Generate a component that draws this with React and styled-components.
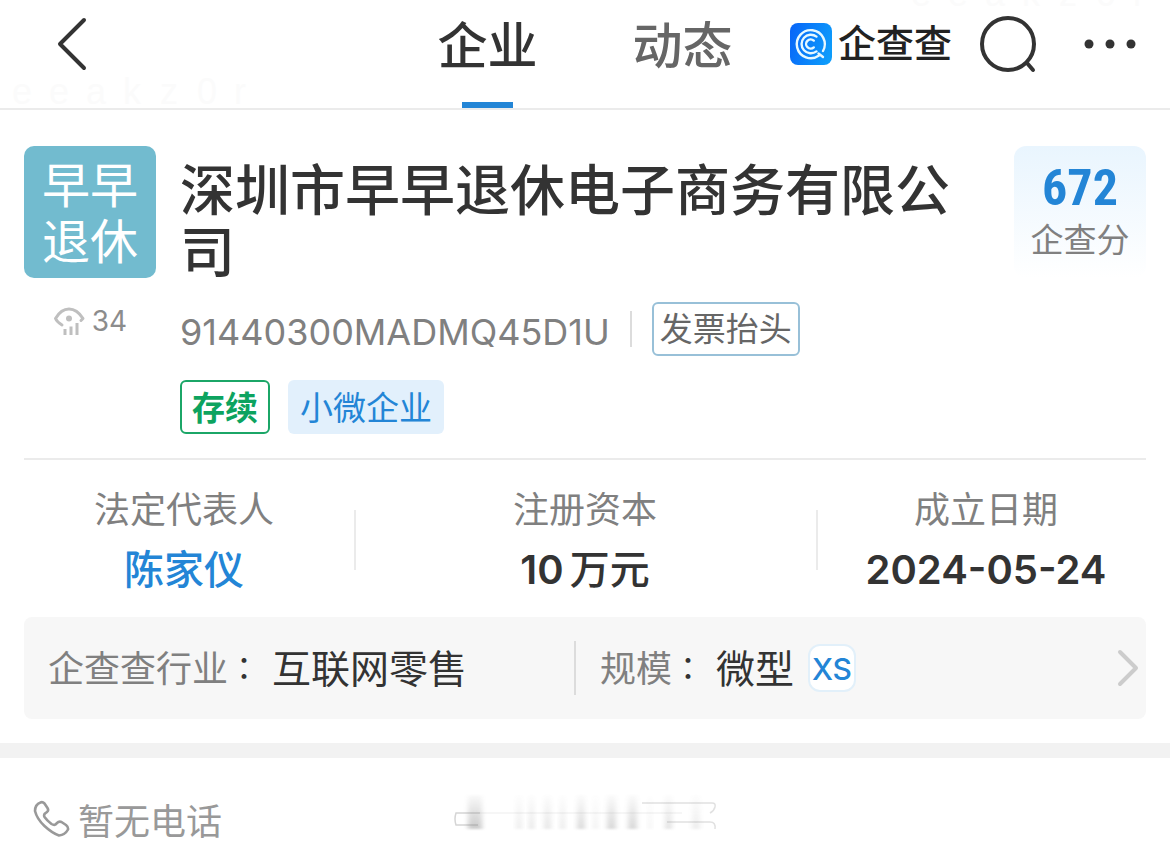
import React from "react";
import styled, { createGlobalStyle } from "styled-components";

const ink = "#333333";
const muted = "#808080";
const blue = "#2385d6";
const cjk = `"Noto Sans CJK SC", sans-serif`;
const latin = `Inter, "Noto Sans CJK SC", sans-serif`;

const GlobalStyle = createGlobalStyle`
  *, *::before, *::after { box-sizing: border-box; }
  body { margin: 0; background: #ffffff; color: ${ink}; font-family: ${cjk}; }
  button { font: inherit; color: inherit; background: none; border: 0; padding: 0; cursor: pointer; }
  a { text-decoration: none; color: inherit; }
  h1, p, dl, dt, dd { margin: 0; font-weight: 400; }
  svg { display: block; flex: none; }
`;

const Header = styled.header`
  position: relative;
  display: grid;
  grid-template-columns: 1fr auto 1fr;
  height: 110px;
  padding: 0 34px;
  border-bottom: 2px solid #ebebeb;
`;

const BackButton = styled.button`
  justify-self: start;
  align-self: start;
  margin: 16px 0 0 20px;
`;

const Tabs = styled.nav`
  display: flex;
  gap: 95px;
`;

const Tab = styled.a`
  display: flex;
  flex-direction: column;
  align-items: center;
  justify-content: space-between;
  font-size: 50px;
  line-height: 84px;
  font-weight: 500;
  color: ${(p) => (p.$active ? ink : "#666666")};
  &::after {
    content: "";
    width: 51px;
    height: 6px;
    background: ${(p) => (p.$active ? blue : "transparent")};
  }
`;

const Actions = styled.div`
  display: flex;
  justify-content: flex-end;
  height: 88px;
  align-items: center;
`;

const Brand = styled.a`
  display: flex;
  align-items: center;
  gap: 6px;
  margin-right: 26px;
`;

const BrandName = styled.span`
  padding-bottom: 6px;
  font-size: 38px;
  font-weight: 500;
  line-height: 48px;
  color: #222222;
`;

const SearchButton = styled.button`
  margin-right: 46px;
`;

const Watermark = styled.span`
  position: absolute;
  z-index: -1;
  display: grid;
  grid-template-columns: repeat(7, 37px);
  font: 36px/40px "Liberation Sans", sans-serif;
  color: #fbfbfb;
  ${(p) => (p.$corner === "top" ? "right: 0; top: -26px;" : "left: 12px; bottom: -4px;")}
`;

const Company = styled.section`
  display: flex;
  gap: 24px;
  align-items: flex-start;
  margin: 0 24px;
  padding: 36px 0 24px;
  border-bottom: 2px solid #ebebeb;
`;

const AvatarColumn = styled.div`
  flex: none;
  width: 132px;
`;

const Avatar = styled.div`
  height: 132px;
  padding: 8px 18px;
  border-radius: 10px;
  background: #72bbcf;
  color: #ffffff;
  font-size: 48px;
  line-height: 56px;
  text-align: center;
`;

const Views = styled.p`
  display: flex;
  align-items: center;
  justify-content: center;
  gap: 7px;
  margin-top: 26px;
  font: 28px/34px ${latin};
  color: #8c8c8c;
`;

const Details = styled.div`
  flex: 1;
  padding-top: 9px;
`;

const CompanyName = styled.h1`
  font-size: 55px;
  line-height: 62px;
  font-weight: 500;
`;

const CodeRow = styled.div`
  display: flex;
  align-items: center;
  gap: 20px;
  margin-top: 23px;
`;

const CreditCode = styled.span`
  padding-top: 6px;
  font: 36px/48px ${latin};
  color: ${muted};
`;

const Rule = styled.span`
  width: 2px;
  height: 36px;
  background: #dcdcdc;
`;

const InvoiceButton = styled.button`
  height: 54px;
  padding: 0 6px 4px;
  border: 2px solid #98c0d8;
  border-radius: 6px;
  font-size: 33px;
  line-height: 46px;
  color: #666666;
`;

const Tags = styled.div`
  display: flex;
  gap: 18px;
  margin-top: 24px;
`;

const Tag = styled.span`
  height: 54px;
  padding: 0 ${(p) => (p.$status ? 10 : 12)}px;
  border: ${(p) => (p.$status ? "2px solid #1ba667" : "0")};
  border-radius: 6px;
  background: ${(p) => (p.$status ? "#ffffff" : "#e2f0fc")};
  color: ${(p) => (p.$status ? "#0da35f" : blue)};
  font-size: 33px;
  font-weight: ${(p) => (p.$status ? 700 : 400)};
  line-height: ${(p) => (p.$status ? 48 : 52)}px;
`;

const Score = styled.a`
  flex: none;
  width: 132px;
  height: 132px;
  padding-top: 16px;
  border-radius: 12px;
  background: linear-gradient(#e9f5fe, #ffffff);
  text-align: center;
`;

const ScoreValue = styled.strong`
  display: block;
  font: 700 50px/52px "Roboto Condensed", Roboto, sans-serif;
  color: ${blue};
`;

const ScoreLabel = styled.span`
  display: block;
  font-size: 33px;
  line-height: 48px;
  color: ${muted};
`;

const Stats = styled.dl`
  display: grid;
  grid-template-columns: 5fr 7fr 5fr;
  margin: 0 24px;
  padding: 22px 0 18px;
`;

const Stat = styled.div`
  position: relative;
  text-align: center;
  &:first-child { padding-right: 10px; }
  &:last-child { padding-left: 10px; }
  & + &::before {
    content: "";
    position: absolute;
    left: 0;
    top: 28px;
    width: 2px;
    height: 60px;
    background: #ebebeb;
  }
`;

const StatLabel = styled.dt`
  font-size: 36px;
  line-height: 50px;
  color: ${muted};
`;

const StatValue = styled.dd`
  height: 67px;
  padding-top: 9px;
  font: 600 40px/57px ${latin};
  color: ${(p) => (p.$link ? blue : ink)};
`;

const Hanzi = styled.span`
  margin-left: ${(p) => (p.$spaced ? 6 : 0)}px;
  font-family: ${cjk};
  font-weight: 500;
  line-height: 40px;
`;

const Industry = styled.a`
  display: flex;
  align-items: center;
  height: 102px;
  margin: 0 24px 24px;
  padding-right: 7px;
  border-radius: 8px;
  background: #f7f7f7;
`;

const Fact = styled.span`
  display: flex;
  align-items: center;
  flex: ${(p) => (p.$grow ? "1" : "0 0 49.5%")};
  height: 54px;
  padding: 0 0 4px 24px;
  border-right: ${(p) => (p.$grow ? "0" : "2px solid #dcdcdc")};
  font-size: 39px;
  line-height: 50px;
`;

const FactLabel = styled.span`
  font-size: 36px;
  color: ${muted};
`;

const Colon = styled.span`
  margin-right: 12px;
  font-family: "Noto Sans CJK JP", sans-serif;
  font-size: 32px;
`;

const SizeBadge = styled.span`
  width: 48px;
  height: 48px;
  margin: 4px 0 0 14px;
  border: 2px solid #e2f0fa;
  border-radius: 12px;
  background: #ffffff;
  font: 500 30px/46px ${latin};
  text-align: center;
  color: ${blue};
`;

const Band = styled.div`
  height: 15px;
  background: #f2f2f2;
`;

const Contact = styled.footer`
  display: grid;
  grid-template-columns: 1fr auto 1fr;
  align-items: start;
  padding: 34px 32px 0;
`;

const Phone = styled.p`
  display: flex;
  align-items: center;
  gap: 8px;
  padding-top: 8px;
  font-size: 36px;
  line-height: 38px;
  color: #999999;
`;

const smudges = [
  [16, 14, 0.3], [64, 6, 0.1], [77, 5, 0.14], [92, 7, 0.14], [108, 5, 0.12],
  [125, 8, 0.2], [141, 5, 0.08], [155, 9, 0.22], [176, 9, 0.22], [196, 4, 0.06],
  [213, 7, 0.16], [240, 8, 0.1],
];

const Redacted = () => (
  <svg width="266" height="40" viewBox="0 0 266 40" aria-hidden="true">
    <defs>
      <filter id="soft" x="-50%" y="-20%" width="200%" height="140%">
        <feGaussianBlur stdDeviation="2.500 1" />
      </filter>
      <linearGradient id="fade" x1="0" y1="0" x2="0" y2="1">
        <stop offset="0" stopColor="#666" stopOpacity="0.1" />
        <stop offset="1" stopColor="#666" />
      </linearGradient>
    </defs>
    {smudges.map(([x, w, o]) => (
      <rect key={x} x={x} y="3" width={w} height="34" fill="url(#fade)" opacity={o * 1.15} filter="url(#soft)" />
    ))}
    <path d="M28 21H4q-2 6 0 12h22" fill="none" stroke="#888" strokeOpacity=".35" strokeWidth="1.5" />
    <path d="M28 21H230" fill="none" stroke="#888" strokeOpacity=".1" strokeWidth="1.5" />
    <path d="M190 11h70q4 0 3 4t-5 6M215 30h43q6 0 5 7" fill="none" stroke="#888" strokeOpacity=".25" strokeWidth="1.5" />
  </svg>
);

const BrandMark = () => (
  <svg width="42" height="42" viewBox="0 0 42 42" aria-hidden="true">
    <defs>
      <linearGradient id="brand" x1="0" y1="0.3" x2="1" y2="0.6">
        <stop offset="0" stopColor="#0868f8" />
        <stop offset="1" stopColor="#0d9cfb" />
      </linearGradient>
    </defs>
    <rect width="42" height="42" rx="8" fill="url(#brand)" />
    <g fill="none" stroke="#e6f8ff" strokeWidth="2.4" strokeLinecap="round">
      <path d="M29 32.500A14 14 0 1 1 33 28" />
      <path d="M28.500 30.500l4.500 3.500" />
      <path d="M26.500 13.600A9.300 9.300 0 1 0 26.500 28.400" />
      <path d="M23.800 17.600A4.600 4.600 0 1 0 23.800 24.400" />
    </g>
  </svg>
);

export default function App() {
  return (
    <>
      <GlobalStyle />
      <Header>
        <Watermark aria-hidden="true">{[..."eeakz0r"].map((c, i) => <span key={i}>{c}</span>)}</Watermark>
        <Watermark $corner="top" aria-hidden="true">{[..."eeakz0r"].map((c, i) => <span key={i}>{c}</span>)}</Watermark>
        <BackButton aria-label="返回">
          <svg width="34" height="56" viewBox="0 0 34 56" fill="none" stroke={ink} strokeWidth="4" strokeLinecap="round" strokeLinejoin="round">
            <path d="M30 4L6 28l24 24" />
          </svg>
        </BackButton>
        <Tabs>
          <Tab href="#company" $active aria-current="page">企业</Tab>
          <Tab href="#news">动态</Tab>
        </Tabs>
        <Actions>
          <Brand href="#home">
            <BrandMark />
            <BrandName>企查查</BrandName>
          </Brand>
          <SearchButton aria-label="搜索">
            <svg width="60" height="60" viewBox="0 0 60 60" fill="none" stroke={ink} strokeWidth="4" strokeLinecap="round">
              <circle cx="30" cy="30" r="26" />
              <path d="M49 49l6 7" />
            </svg>
          </SearchButton>
          <button aria-label="更多">
            <svg width="52" height="10" viewBox="0 0 52 10" fill={ink}>
              <circle cx="5" cy="5" r="4.5" />
              <circle cx="26" cy="5" r="4.5" />
              <circle cx="47" cy="5" r="4.5" />
            </svg>
          </button>
        </Actions>
      </Header>

      <main>
        <Company>
          <AvatarColumn>
            <Avatar>早早退休</Avatar>
            <Views>
              <svg width="32" height="28" viewBox="0 0 32 28" fill="none" stroke="#bfbfbf" strokeWidth="3" strokeLinecap="round" strokeLinejoin="round" aria-hidden="true">
                <path d="M9 18Q4 15 2.500 11.500Q8 2 16 2T30 11.500L28 13.500" />
                <circle cx="16" cy="11.500" r="3" fill="#bfbfbf" stroke="none" />
                <path d="M12 22v6M18 19.500v8.500M24 16v12" strokeLinecap="butt" />
              </svg>
              34
            </Views>
          </AvatarColumn>
          <Details>
            <CompanyName>深圳市早早退休电子商务有限公司</CompanyName>
            <CodeRow>
              <CreditCode>91440300MADMQ45D1U</CreditCode>
              <Rule />
              <InvoiceButton>发票抬头</InvoiceButton>
            </CodeRow>
            <Tags>
              <Tag $status>存续</Tag>
              <Tag>小微企业</Tag>
            </Tags>
          </Details>
          <Score href="#score">
            <ScoreValue>672</ScoreValue>
            <ScoreLabel>企查分</ScoreLabel>
          </Score>
        </Company>

        <Stats>
          <Stat>
            <StatLabel>法定代表人</StatLabel>
            <StatValue $link><Hanzi as="a" href="#person">陈家仪</Hanzi></StatValue>
          </Stat>
          <Stat>
            <StatLabel>注册资本</StatLabel>
            <StatValue>10<Hanzi $spaced>万元</Hanzi></StatValue>
          </Stat>
          <Stat>
            <StatLabel>成立日期</StatLabel>
            <StatValue>2024-05-24</StatValue>
          </Stat>
        </Stats>

        <Industry href="#industry">
          <Fact>
            <FactLabel>企查查行业</FactLabel>
            <Colon>：</Colon>
            互联网零售
          </Fact>
          <Fact $grow>
            <FactLabel>规模</FactLabel>
            <Colon>：</Colon>
            微型
            <SizeBadge>XS</SizeBadge>
          </Fact>
          <svg width="22" height="40" viewBox="0 0 22 40" fill="none" stroke="#cccccc" strokeWidth="4" strokeLinecap="round" strokeLinejoin="round" aria-hidden="true">
            <path d="M3 4l16 16L3 36" />
          </svg>
        </Industry>
        <Band />
      </main>

      <Contact>
        <Phone>
          <svg width="38" height="38" viewBox="0 0 38 38" fill="none" stroke="#999999" strokeWidth="2.600" strokeLinejoin="round" aria-hidden="true">
            <path d="M8.500 2.500Q3 4.500 3 11Q5 19 12.500 26T27 35.500Q33 35 36 29.500Q36.500 27 34 25L29.500 22Q27 21 25 23L23.500 24.500Q22 25.500 19.500 24Q15 20.500 12.500 17Q11.500 15 13 13.500L15 12Q17 10.500 15.500 8L12.500 3.500Q10.500 1.500 8.500 2.500Z" />
          </svg>
          暂无电话
        </Phone>
        <Redacted />
      </Contact>
    </>
  );
}
